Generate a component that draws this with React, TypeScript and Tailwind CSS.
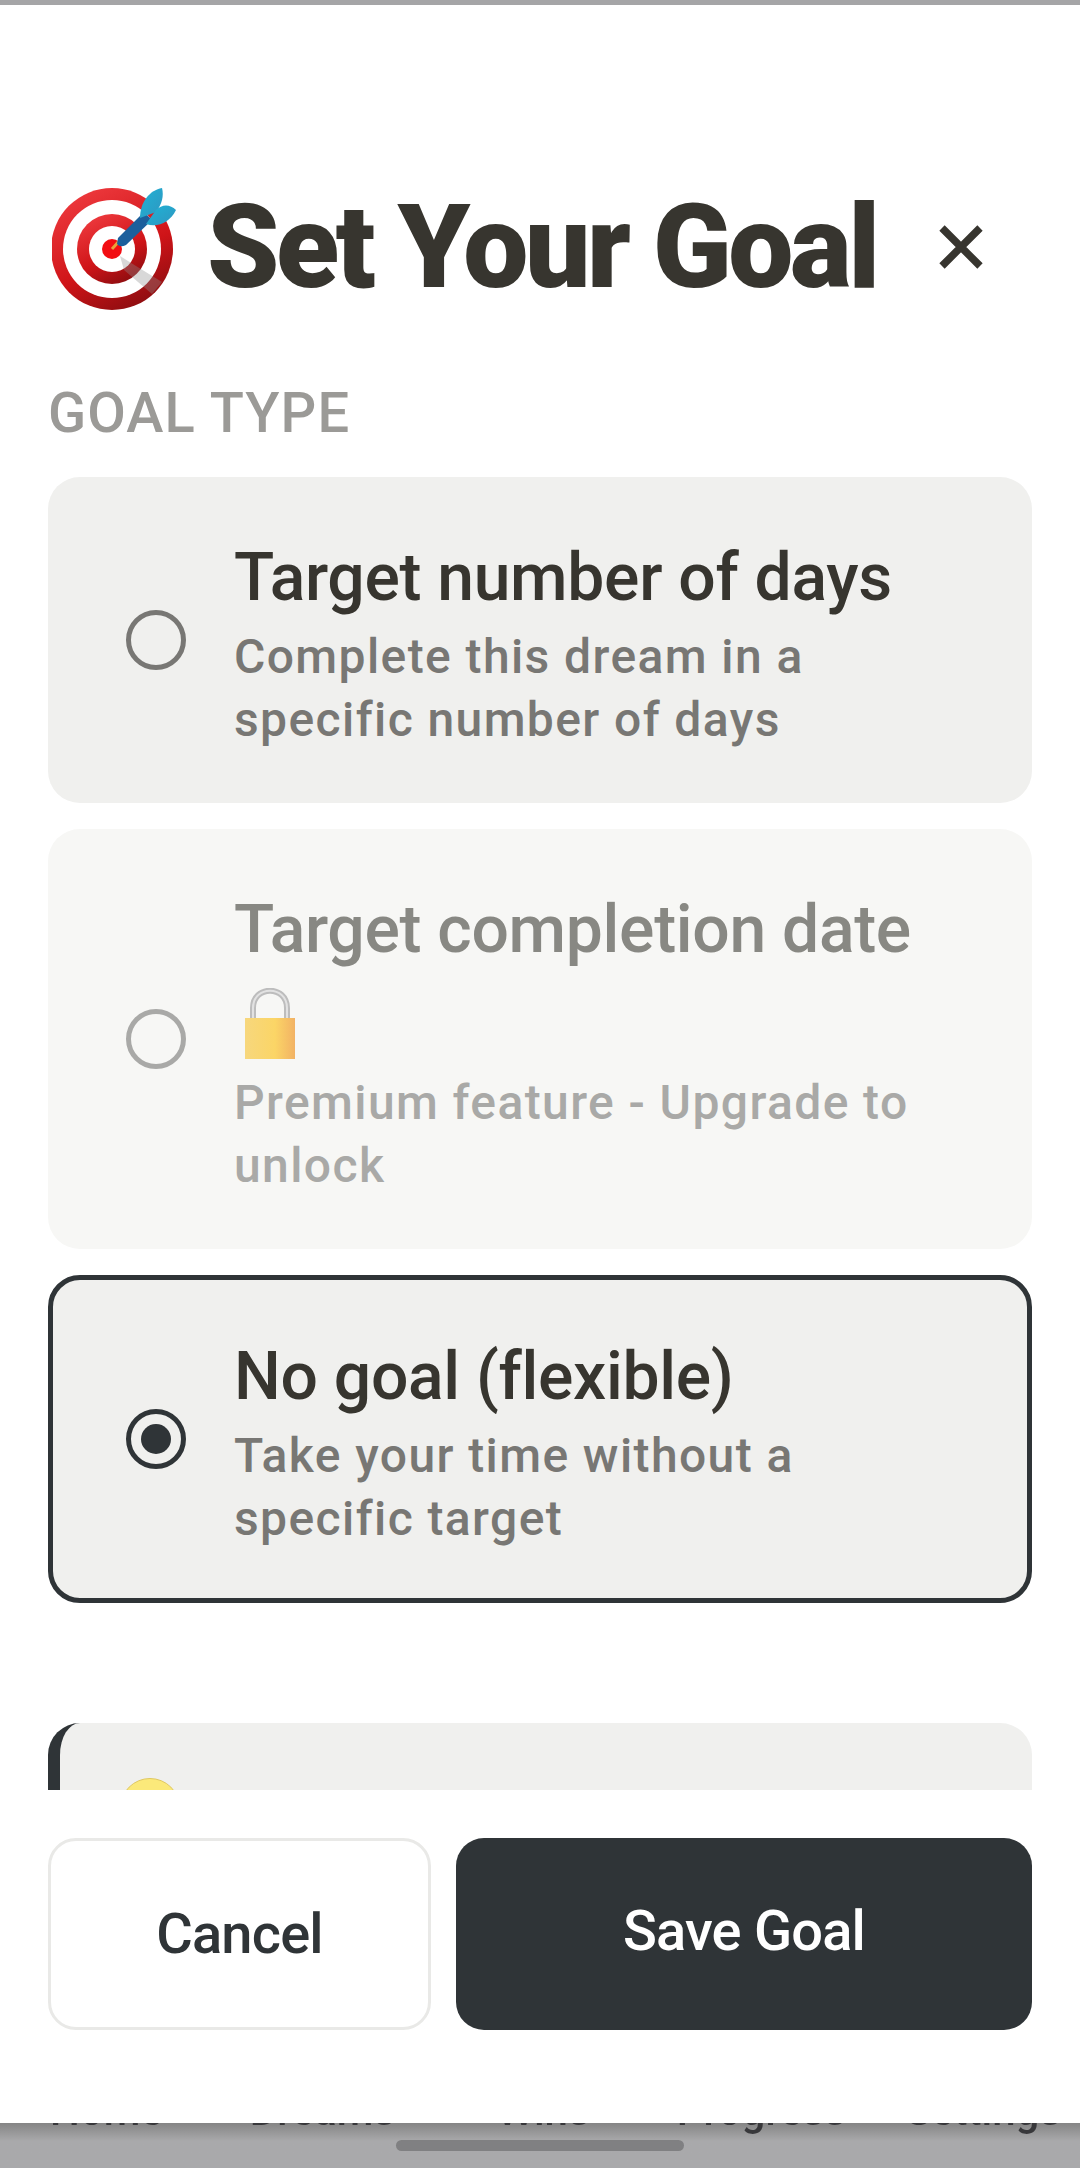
const roboto = { fontFamily: 'Roboto, sans-serif' };

function TargetEmoji() {
  return (
    <svg viewBox="0 0 130 130" className="ml-[4px] h-[130px] w-[130px] shrink-0">
      <defs>
        <linearGradient id="ring" x1="0.2" y1="0" x2="0.7" y2="1">
          <stop offset="0" stopColor="#ef3b3f" />
          <stop offset="0.6" stopColor="#cf1418" />
          <stop offset="1" stopColor="#8c0d10" />
        </linearGradient>
        <linearGradient id="flight" x1="0" y1="0" x2="1" y2="1">
          <stop offset="0" stopColor="#1fb3d6" />
          <stop offset="1" stopColor="#2f96c0" />
        </linearGradient>
      </defs>
      <circle cx="60" cy="67" r="61" fill="url(#ring)" />
      <circle cx="60" cy="67" r="49" fill="#ffffff" />
      <circle cx="60" cy="67" r="35" fill="url(#ring)" />
      <circle cx="60" cy="67" r="23" fill="#ffffff" />
      <circle cx="60" cy="67" r="10" fill="#f20d12" />
      <path d="M68 74 L84 84 L110 100 L100 112 L86 100 L72 88 Z" fill="#8f8f8f" opacity="0.35" />
      <path d="M60 67 L68 58" stroke="#e8a33a" strokeWidth="3" />
      <path d="M66 56 L92 30 L100 38 L74 63 Q68 66 65 62 Z" fill="#1c5f9c" />
      <path d="M88 36 C88 20 98 8 110 6 C112 14 110 22 104 30 Z" fill="url(#flight)" />
      <path d="M94 42 C106 46 118 40 124 28 C118 22 110 22 104 28 Z" fill="url(#flight)" />
    </svg>
  );
}

function LockEmoji() {
  return (
    <svg viewBox="0 0 50 71" className="ml-[11px] h-[71px] w-[50px]">
      <defs>
        <linearGradient id="lockBody" x1="0" y1="0" x2="1" y2="0">
          <stop offset="0" stopColor="#f7d77d" />
          <stop offset="0.6" stopColor="#fbd566" />
          <stop offset="1" stopColor="#f2b264" />
        </linearGradient>
      </defs>
      <path d="M8 32 V20 C8 -3 42 -3 42 20 V32" fill="none" stroke="#bdbdbd" strokeWidth="6" />
      <path d="M8 32 V20 C8 -3 42 -3 42 20 V32" fill="none" stroke="#e2e2e2" strokeWidth="2" />
      <rect x="0" y="30" width="50" height="41" fill="url(#lockBody)" />
    </svg>
  );
}

function Radio({ state }: { state: 'off' | 'dim' | 'on' }) {
  const border =
    state === 'on' ? 'border-[#2f3437]' : state === 'dim' ? 'border-[#a9a9a7]' : 'border-[#787774]';
  return (
    <div className={`flex h-[60px] w-[60px] shrink-0 items-center justify-center rounded-full border-[5px] ${border}`}>
      {state === 'on' && <div className="h-[30px] w-[30px] rounded-full bg-[#2f3437]" />}
    </div>
  );
}

function Sub({ children, dim }: { children: string; dim?: boolean }) {
  return (
    <div className={`text-[48px] leading-[63px] font-medium tracking-[1.4px] ${dim ? 'text-[#a9a9a7]' : 'text-[#787774]'}`}>
      {children}
    </div>
  );
}

export default function App() {
  return (
    <div className="flex h-[2168px] w-[1080px] flex-col overflow-hidden bg-[#a9a9ab]" style={roboto}>
      <div className="h-[5px] shrink-0 bg-[#a5a5a7]" />

      <div className="flex h-[2118px] shrink-0 flex-col bg-white">
        <div className="h-[1785px] shrink-0 overflow-hidden px-[48px]">
          <div className="mt-[176px] flex items-center">
            <TargetEmoji />
            <h1 className="ml-[25px] text-[116px] leading-[132px] font-black tracking-[-3.5px] text-[#37352f]">
              Set Your Goal
            </h1>
            <div className="ml-[56px] flex h-[56px] w-[56px] items-center justify-center">
              <svg viewBox="0 0 44 44" className="h-[44px] w-[44px]">
                <path d="M3 3 L41 41 M41 3 L3 41" stroke="#37352f" strokeWidth="7.5" />
              </svg>
            </div>
          </div>

          <div className="mt-[67px] text-[56px] leading-[66px] font-medium tracking-[1.1px] text-[#9b9a97]">GOAL TYPE</div>

          <div className="mt-[31px] flex flex-col gap-[26px]">
            <div className="flex h-[326px] items-center rounded-[32px] bg-[#f0f0ee] pr-[48px] pl-[78px]">
              <Radio state="off" />
              <div className="ml-[48px] min-w-0">
                <div className="text-[66px] leading-[95px] font-medium tracking-[-0.3px] text-[#37352f]">Target number of days</div>
                <Sub>Complete this dream in a</Sub>
                <Sub>specific number of days</Sub>
              </div>
            </div>

            <div className="flex h-[420px] items-center rounded-[32px] bg-[#f7f7f5] pr-[48px] pl-[78px]">
              <Radio state="dim" />
              <div className="ml-[48px] min-w-0">
                <div className="text-[66px] leading-[95px] font-medium tracking-[-0.3px] text-[#888883]">Target completion date</div>
                <div className="flex h-[94px] items-center">
                  <LockEmoji />
                </div>
                <Sub dim>Premium feature - Upgrade to</Sub>
                <Sub dim>unlock</Sub>
              </div>
            </div>

            <div className="flex h-[328px] items-center rounded-[32px] border-[5px] border-[#2f3437] bg-[#f0f0ee] pr-[43px] pl-[73px]">
              <Radio state="on" />
              <div className="ml-[48px] min-w-0">
                <div className="text-[66px] leading-[95px] font-medium tracking-[-0.3px] text-[#37352f]">No goal (flexible)</div>
                <Sub>Take your time without a</Sub>
                <Sub>specific target</Sub>
              </div>
            </div>
          </div>

          <div className="mt-[120px] h-[200px] rounded-[32px] border-l-[12px] border-[#2f3437] bg-[#f0f0ee] pt-[55px] pl-[60px]">
            <div className="flex items-start">
              <div className="h-[60px] w-[60px] shrink-0 rounded-full border border-[#e0c860] bg-[#fbe97a]" />
              <div className="ml-[10px] text-[54px] leading-[70px] whitespace-nowrap text-[#37352f]">You can always set a</div>
            </div>
          </div>
        </div>

        <div className="flex gap-[25px] px-[48px] pt-[48px]">
          <button className="h-[192px] w-[383px] rounded-[28px] border-[3px] border-[#e9e9e7] bg-white text-[56px] font-medium tracking-[-0.8px] text-[#2f3437]">
            Cancel
          </button>
          <button className="h-[192px] flex-1 rounded-[28px] bg-[#2f3437] pb-[6px] text-[56px] font-medium tracking-[-0.8px] text-white">
            Save Goal
          </button>
        </div>
      </div>

      <div className="relative flex-1 overflow-hidden bg-gradient-to-b from-[#858585] to-[#a9a9ab] to-40%">
        <div className="absolute top-[-34px] left-0 flex w-full text-[42px] leading-[44px] font-medium text-[#38383b] blur-[0.5px]">
          <span className="ml-[50px]">Home</span>
          <span className="ml-[87px]">Dreams</span>
          <span className="ml-[102px]">Wins</span>
          <span className="ml-[87px]">Progress</span>
          <span className="ml-[60px]">Settings</span>
        </div>
        <div className="mx-auto mt-[17px] h-[11px] w-[288px] rounded-full bg-[#808082]" />
      </div>
    </div>
  );
}
